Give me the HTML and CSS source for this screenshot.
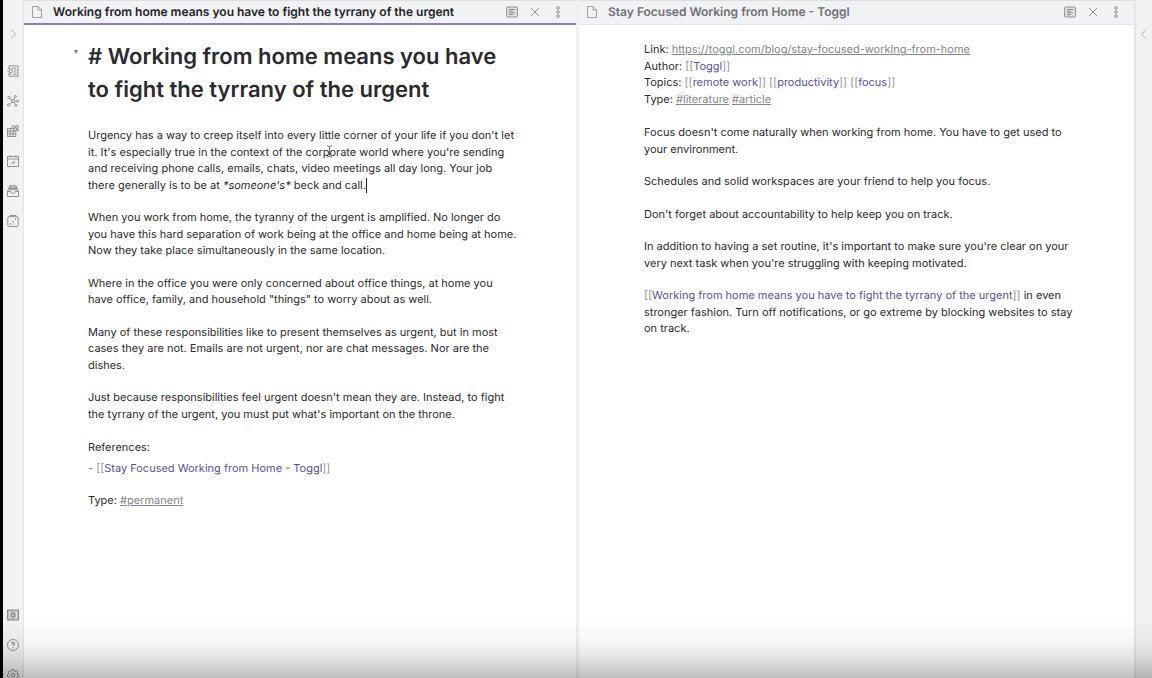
FILE: index.html
```html
<!DOCTYPE html>
<html lang="en">
<head>
<meta charset="utf-8">
<title>Working from home means you have to fight the tyrrany of the urgent</title>
<link rel="stylesheet" href="styles.css">
</head>
<body>
<svg class="sprite" aria-hidden="true">
  <symbol id="doc" viewBox="0 0 12 14"><path d="M1.5 1.5h5.500l3.500 3.500v7.500h-9zM7 1.500v3.500h3.500"/></symbol>
  <symbol id="preview" viewBox="0 0 12 12"><rect x=".6" y="1" width="10.800" height="10" rx="1"/><path d="M3 3.500h6M3 5.200h4M3 6.900h6M3 8.600h4"/></symbol>
  <symbol id="close" viewBox="0 0 12 12"><path d="M2 2l8 8M10 2l-8 8"/></symbol>
  <symbol id="more" viewBox="0 0 12 12"><circle cx="6" cy="1.900" r="1.300"/><circle cx="6" cy="6" r="1.300"/><circle cx="6" cy="10.100" r="1.300"/></symbol>
</svg>
<div class="app">
  <nav class="ribbon" aria-label="Ribbon">
    <div class="group">
      <button class="icon expand" aria-label="Expand sidebar"><svg viewBox="0 0 12 12"><path d="M4 1.500l4.500 4.500L4 10.500"/></svg></button>
      <button class="icon" aria-label="Open quick switcher"><svg viewBox="0 0 12 12"><path d="M2 3V.8h9v10.400H2V9M5 3h4M6 9.200h3.500M7 5h2.500M7 7h2.500M.5 6h1.500"/><circle cx="3.800" cy="6" r="1.700"/><path d="M1 3.300h2.500M1 8.800h3"/></svg></button>
      <button class="icon" aria-label="Open graph view"><svg viewBox="0 0 12 12"><circle cx="6" cy="6" r="1.500"/><circle cx="2" cy="2.500" r="1.200"/><circle cx="8.300" cy="1.500" r="1"/><circle cx="10.600" cy="6.300" r="1"/><circle cx="8.900" cy="10.400" r="1.100"/><circle cx="1.700" cy="9.900" r="1.200"/><path d="M2.900 3.300l2 1.700M7.900 2.500l-1.200 2.200M7.500 6.100h2.100M7 7.200l1.300 2.200M4.900 7.200L2.600 9"/></svg></button>
      <button class="icon" aria-label="Open blocks"><svg viewBox="0 0 12 12"><path d="M.5 3.500H6v2.700h2.800v5.300H.5zM.5 6.200H6M.5 8.900h8.300M3.200 3.500v8M6 6.200v5.300"/><circle cx="6.300" cy="1.900" r="1.400"/><circle cx="10" cy="1.800" r="1.400"/><circle cx="8.300" cy="4.200" r="1.300"/><circle cx="10.500" cy="5" r="1"/></svg></button>
      <button class="icon" aria-label="Open today's note"><svg viewBox="0 0 12 12"><path d="M.5 1.500h11v10H.5zM.5 4h11M3 .2v2.300M9 .2v2.300M4 7.500l1.500 1.500L8 6"/></svg></button>
      <button class="icon" aria-label="Open archive"><svg viewBox="0 0 12 12"><path d="M.5 6.500l1.500-3h8l1.500 3v5H.5zM.5 6.500h3.300c.2 2.700 4.200 2.700 4.400 0h3.300M2 3.500v-1.300h8v1.300M2.800 2.200V.7h6.400v1.500M2.200 4.800h7.600"/></svg></button>
      <button class="icon" aria-label="Open random note"><svg viewBox="0 0 12 12"><rect x=".8" y="1.700" width="10.400" height="9.800" rx="1.500"/><path d="M2.200 1.500L3 .5h6l.8 1"/><circle class="dot" cx="8.500" cy="4.300" r=".8"/><circle class="dot" cx="6" cy="6.600" r=".8"/><circle class="dot" cx="3.500" cy="8.900" r=".8"/><circle class="dot" cx="6.600" cy="9" r=".6"/></svg></button>
    </div>
    <div class="group">
      <button class="icon" aria-label="Open another vault"><svg viewBox="0 0 12 12"><rect class="vault" x=".4" y="1" width="11.200" height="10"/><path class="light" d="M4 3H2.500v6H4M8 3h1.500v6H8"/><circle cx="6" cy="6" r="2"/></svg></button>
      <button class="icon" aria-label="Help"><svg viewBox="0 0 12 12"><circle cx="6" cy="6" r="5.500"/><path class="strong" d="M4.500 4.800c0-2 3-2 3 0C7.500 5.900 6 5.900 6 7.100M6 8.200v1"/></svg></button>
      <button class="icon" aria-label="Settings"><svg viewBox="0 0 12 12"><circle cx="6" cy="6" r="1.800"/><path d="M5.100.5h1.800l.3 1.500 1.100.5 1.300-.9 1.300 1.300-.9 1.300.5 1.100 1.400.3v1.800l-1.400.3-.5 1.100.9 1.300-1.300 1.300-1.300-.9-1.100.5-.3 1.400H5.100L4.800 11l-1.100-.5-1.300.9-1.300-1.300.9-1.300-.5-1.100L.1 7.400V5.600l1.400-.3L2 4.200l-.9-1.300 1.300-1.300 1.300.9L4.800 2z"/></svg></button>
    </div>
  </nav>

  <main class="workspace">
    <section class="pane active">
      <header class="bar">
        <svg class="file"><use href="#doc"/></svg>
        <h2 class="name">Working from home means you have to fight the tyrrany of the urgent</h2>
        <button class="icon" aria-label="Preview"><svg class="page"><use href="#preview"/></svg></button>
        <button class="icon" aria-label="Close"><svg><use href="#close"/></svg></button>
        <button class="icon" aria-label="More options"><svg><use href="#more"/></svg></button>
      </header>
      <article class="note">
        <h1 class="title"><button class="fold" aria-label="Fold heading"></button># Working from home means you have to fight the tyrrany of the urgent</h1>
        <p>Urgency has a way to creep itself into every little corner of your life if you don't let it. It's especially true in the context of the corp<span class="pointer"><svg viewBox="0 0 7 13"><path d="M1 .8q2.500 0 2.500 1.700v8q0 1.700-2.500 1.700M6 .8q-2.500 0-2.500 1.700M6 12.200q-2.500 0-2.500-1.700M2.200 8.500h2.600"/></svg></span>orate world where you're sending and receiving phone calls, emails, chats, video meetings all day long. Your job there generally is to be at <em>*someone's*</em> beck and call.<span class="caret"></span></p>
        <p>When you work from home, the tyranny of the urgent is amplified. No longer do you have this hard separation of work being at the office and home being at home. Now they take place simultaneously in the same location.</p>
        <p>Where in the office you were only concerned about office things, at home you have office, family, and household "things" to worry about as well.</p>
        <p>Many of these responsibilities like to present themselves as urgent, but in most cases they are not. Emails are not urgent, nor are chat messages. Nor are the dishes.</p>
        <p>Just because responsibilities feel urgent doesn't mean they are. Instead, to fight the tyrrany of the urgent, you must put what's important on the throne.</p>
        <div class="refs">
          <div>References:</div>
          <div class="item">- <span class="link">[[<a href="#toggl">Stay Focused Working from Home - Toggl</a>]]</span></div>
        </div>
        <p>Type: <a class="tag" href="#permanent">#permanent</a></p>
      </article>
    </section>

    <section class="pane">
      <header class="bar">
        <svg class="file"><use href="#doc"/></svg>
        <h2 class="name">Stay Focused Working from Home - Toggl</h2>
        <button class="icon" aria-label="Preview"><svg class="page"><use href="#preview"/></svg></button>
        <button class="icon" aria-label="Close"><svg><use href="#close"/></svg></button>
        <button class="icon" aria-label="More options"><svg><use href="#more"/></svg></button>
      </header>
      <article class="note linked">
        <div class="meta">
          <div>Link: <a class="tag" href="#blog">https://toggl.com/blog/stay-focused-working-from-home</a></div>
          <div>Author: <span class="link">[[<a href="#author">Toggl</a>]]</span></div>
          <div>Topics: <span class="link">[[<a href="#remote">remote work</a>]]</span> <span class="link">[[<a href="#productivity">productivity</a>]]</span> <span class="link">[[<a href="#focus">focus</a>]]</span></div>
          <div>Type: <a class="tag" href="#literature">#literature</a> <a class="tag" href="#article">#article</a></div>
        </div>
        <p>Focus doesn't come naturally when working from home. You have to get used to your environment.</p>
        <p>Schedules and solid workspaces are your friend to help you focus.</p>
        <p>Don't forget about accountability to help keep you on track.</p>
        <p>In addition to having a set routine, it's important to make sure you're clear on your very next task when you're struggling with keeping motivated.</p>
        <p><span class="link">[[<a href="#tyrrany">Working from home means you have to fight the tyrrany of the urgent</a>]]</span> in even stronger fashion. Turn off notifications, or go extreme by blocking websites to stay on track.</p>
      </article>
    </section>
  </main>

  <aside class="ribbon right">
    <button class="icon expand" aria-label="Expand right sidebar"><svg viewBox="0 0 12 12"><path d="M8 1.500L3.500 6 8 10.500"/></svg></button>
  </aside>
</div>
<div class="shade"></div>
</body>
</html>
```
FILE: styles.css
```css
* { box-sizing: border-box; }
body {
  margin: 0;
  overflow: hidden;
  background: #fff;
  color: #2a2b2d;
  font: 11px/1.5 Inter, "Liberation Sans", sans-serif;
  text-rendering: geometricPrecision;
}
h1, h2, p { margin: 0; }
svg { display: block; fill: none; stroke: currentColor; stroke-width: 1; }
.sprite { position: absolute; width: 0; height: 0; }
.app { display: flex; height: 100vh; overflow: hidden; }

.icon {
  display: block;
  padding: 0;
  border: 0;
  background: none;
  color: #85878a;
}
.icon svg { width: 12px; height: 12px; stroke-width: 0.9; }
.icon .page { background: linear-gradient(#dfe0e1, #dfe0e1) center / 10px 10px no-repeat; }
.icon .dot { fill: currentColor; stroke: none; }
.icon .vault { fill: #bbbcbe; }
.icon .light { stroke: #e8e9eb; }
.icon .strong { stroke-width: 1.2; }

.ribbon {
  flex: none;
  display: flex;
  flex-direction: column;
  justify-content: space-between;
  align-items: center;
  width: 24px;
  padding-top: 28px;
  border-left: 3px solid #000;
  border-right: 1px solid #e4e5e7;
  background: #f1f2f4;
}
.group { display: flex; flex-direction: column; gap: 18px; }
.group:last-child { margin-bottom: -3px; }
.group .expand { margin-bottom: 7px; }
.icon.expand { color: #a3a5a7; }
.right {
  width: 18px;
  border-left: 2px solid #e6e6e7;
  border-right: 0;
}

.workspace { flex: 1; display: grid; grid-template-columns: 1fr 1fr; min-width: 0; }
.pane { display: flex; flex-direction: column; min-width: 0; }
.pane.active { border-right: 3px solid #f1f1f2; }
.bar {
  display: flex;
  align-items: center;
  gap: 11px;
  height: 25px;
  padding: 0 12px 1px 7px;
  border-top: 1px solid #dedfe0;
  border-bottom: 1px solid #e6e7e8;
  background: #f1f2f4;
  color: #6f7072;
}
.active .bar { padding-bottom: 0; border-bottom: 2px solid #8d7bd0; color: #222325; }
.file { flex: none; width: 12px; height: 14px; color: #96989a; stroke-width: 0.9; }
.name { flex: 1; margin-left: -1px; font-size: 12px; font-weight: 600; line-height: 16px; white-space: nowrap; }

.note { display: flex; flex-direction: column; gap: 16px; padding: 16px 56px 0 64px; }
.note.linked { padding-left: 65px; }
.title {
  position: relative;
  margin-bottom: 4px;
  font-size: 22px;
  font-weight: 600;
  line-height: 33px;
}
.fold {
  position: absolute;
  left: -14px;
  top: 9px;
  width: 4px;
  height: 4px;
  padding: 0;
  border: 0;
  background: #77797b;
  clip-path: polygon(0 0, 100% 0, 50% 100%);
}
.meta { padding-bottom: 1px; }
.refs { padding-top: 1px; }
.item { margin-top: 4px; color: #6f7072; }
.link { color: #929395; }
.link a { color: #5b4fa3; text-decoration: none; }
.tag { color: #858688; text-decoration: underline; }
.pointer { position: relative; }
.pointer svg { position: absolute; left: -3px; top: 0; width: 7px; height: 13px; color: #444; stroke-width: 0.8; }
.caret { display: inline-block; height: 15px; border-left: 1px solid #222; vertical-align: middle; }

.shade {
  position: fixed;
  inset: auto 0 0;
  height: 60px;
  background: linear-gradient(rgba(0, 0, 0, 0), rgba(0, 0, 0, 0.04) 42%, rgba(0, 0, 0, 0.12) 70%, rgba(0, 0, 0, 0.26));
  pointer-events: none;
}
```
